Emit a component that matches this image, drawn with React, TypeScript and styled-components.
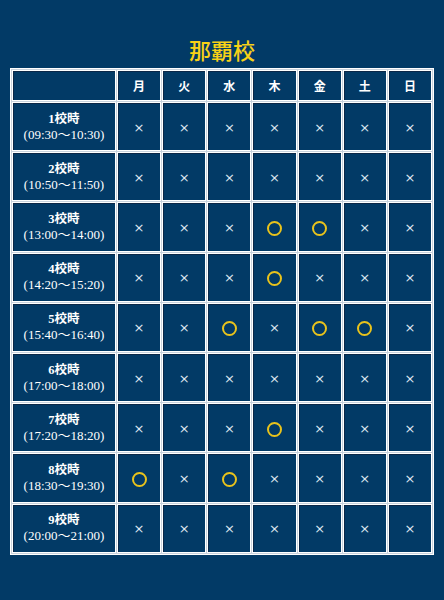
import React from "react";
import styled, { createGlobalStyle } from "styled-components";

const Global = createGlobalStyle`
  html, body { margin: 0; padding: 0; background: #023a66; }
  body { font-family: "Liberation Serif", "Noto Sans CJK JP", serif; }
`;

const Page = styled.div`
  width: 444px;
  height: 600px;
  background: #023a66;
  padding: 34px 10px 0;
  box-sizing: border-box;
`;

const Title = styled.h1`
  margin: 0 0 4px;
  height: 30px;
  line-height: 30px;
  text-align: center;
  font-family: "Noto Sans CJK JP", sans-serif;
  font-weight: 500;
  font-size: 22px;
  color: #f7d117;
`;

const Table = styled.table`
  width: 424px;
  table-layout: fixed;
  border: 1px solid #ffffff;
  border-spacing: 1px;
  background: #c9d3de;
`;

const HeadCell = styled.th`
  height: 29px;
  padding: 0;
  border: 1px solid #ffffff;
  background: #023a66;
  box-shadow: inset 1px 1px 0 #0b2747;
  color: #ffffff;
  font-family: "Noto Sans CJK JP", sans-serif;
  font-weight: 700;
  font-size: 12px;
  text-align: center;
  vertical-align: middle;
`;

const LabelCell = styled.td`
  height: 47.2px;
  padding: 0;
  border: 1px solid #ffffff;
  background: #023a66;
  box-shadow: inset 1px 1px 0 #0b2747;
  color: #ffffff;
  text-align: center;
  vertical-align: middle;
  line-height: 16px;
`;

const Period = styled.div`
  font-weight: 700;
  font-size: 12.5px;
`;

const Time = styled.div`
  font-size: 13px;
`;

const MarkCell = styled.td`
  height: 47.2px;
  padding: 0;
  border: 1px solid #ffffff;
  background: #023a66;
  box-shadow: inset 1px 1px 0 #0b2747;
  text-align: center;
  vertical-align: middle;
`;

const Cross = styled.span`
  display: inline-block;
  color: #dfe6f0;
  font-family: "DejaVu Sans", sans-serif;
  font-size: 13px;
  line-height: 14px;
`;

const Circle = styled.span`
  display: inline-block;
  width: 11px;
  height: 11px;
  border: 2px solid #e9c31c;
  border-radius: 50%;
  vertical-align: middle;
`;

const days = ["月", "火", "水", "木", "金", "土", "日"];

const rows: { n: number; time: string; ok: number[] }[] = [
  { n: 1, time: "(09:30〜10:30)", ok: [] },
  { n: 2, time: "(10:50〜11:50)", ok: [] },
  { n: 3, time: "(13:00〜14:00)", ok: [3, 4] },
  { n: 4, time: "(14:20〜15:20)", ok: [3] },
  { n: 5, time: "(15:40〜16:40)", ok: [2, 4, 5] },
  { n: 6, time: "(17:00〜18:00)", ok: [] },
  { n: 7, time: "(17:20〜18:20)", ok: [3] },
  { n: 8, time: "(18:30〜19:30)", ok: [0, 2] },
  { n: 9, time: "(20:00〜21:00)", ok: [] },
];

export default function App() {
  return (
    <>
      <Global />
      <Page>
        <Title>那覇校</Title>
        <Table>
          <colgroup>
            <col style={{ width: 104 }} />
            {days.map((d) => (
              <col key={d} />
            ))}
          </colgroup>
          <thead>
            <tr>
              <HeadCell />
              {days.map((d) => (
                <HeadCell key={d}>{d}</HeadCell>
              ))}
            </tr>
          </thead>
          <tbody>
            {rows.map((r) => (
              <tr key={r.n}>
                <LabelCell>
                  <Period>{r.n}校時</Period>
                  <Time>{r.time}</Time>
                </LabelCell>
                {days.map((d, i) => (
                  <MarkCell key={d}>
                    {r.ok.includes(i) ? <Circle /> : <Cross>×</Cross>}
                  </MarkCell>
                ))}
              </tr>
            ))}
          </tbody>
        </Table>
      </Page>
    </>
  );
}
